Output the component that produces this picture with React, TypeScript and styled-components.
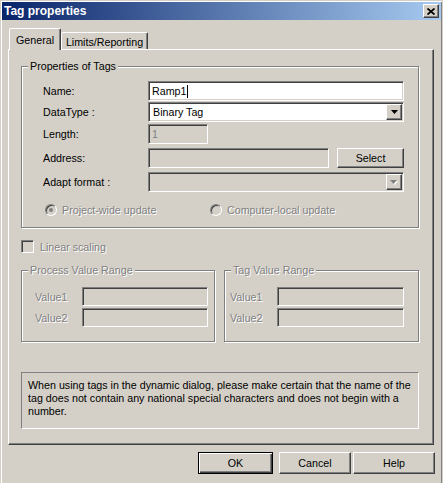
import styled, { createGlobalStyle } from "styled-components";

const GlobalStyle = createGlobalStyle`
  html, body {
    margin: 0;
    padding: 0;
    background: #d4d0c8;
  }
  body {
    font-family: "Liberation Sans", Arial, sans-serif;
    font-size: 10.7px;
    color: #000;
  }
  * {
    box-sizing: border-box;
  }
`;

const App = () => {
  return (
    <>
      <GlobalStyle />
      <Window>
        <TitleBar>
          <TitleText>Tag properties</TitleText>
          <CloseButton>
            <svg width="8" height="7" viewBox="0 0 8 7">
              <path d="M0.5 0.5 L7.5 6.5 M7.5 0.5 L0.5 6.5" stroke="#000" strokeWidth="1.7" />
            </svg>
          </CloseButton>
        </TitleBar>

        <Body>
          <TabStrip>
            <Tab $active $w={52}>General</Tab>
            <Tab $w={87}>Limits/Reporting</Tab>
          </TabStrip>

          <Panel>
            <Group $w={398} $h={162} $mt={16}>
              <GroupTitle>Properties of Tags</GroupTitle>

              <FormRow $mt={8}>
                <Label>Name:</Label>
                <Field $w={256}>
                  Ramp1
                  <Caret />
                </Field>
              </FormRow>
              <FormRow $mt={1}>
                <Label>DataType :</Label>
                <Combo $w={256}>
                  <ComboText>Binary Tag</ComboText>
                  <ArrowButton>
                    <svg width="7" height="4" viewBox="0 0 7 4">
                      <polygon points="0,0 7,0 3.5,4" fill="#000" />
                    </svg>
                  </ArrowButton>
                </Combo>
              </FormRow>
              <FormRow $mt={2}>
                <Label>Length:</Label>
                <Field $w={60} $disabled>
                  1
                </Field>
              </FormRow>
              <FormRow $mt={4}>
                <Label>Address:</Label>
                <Field $w={181} $disabled />
                <Button $w={67} $h={20} $ml={8}>
                  Select
                </Button>
              </FormRow>
              <FormRow $mt={4}>
                <Label>Adapt format :</Label>
                <Combo $w={256} $disabled>
                  <ComboText />
                  <ArrowButton>
                    <svg width="8" height="5" viewBox="0 0 8 5">
                      <polygon points="1,1 8,1 4.5,5" fill="#fff" />
                      <polygon points="0,0 7,0 3.5,4" fill="#808080" />
                    </svg>
                  </ArrowButton>
                </Combo>
              </FormRow>

              <RadioRow>
                <RadioOption $w={165}>
                  <Radio>
                    <RadioDot />
                  </Radio>
                  <DisabledText>Project-wide update</DisabledText>
                </RadioOption>
                <RadioOption>
                  <Radio />
                  <DisabledText>Computer-local update</DisabledText>
                </RadioOption>
              </RadioRow>
            </Group>

            <CheckRow>
              <Checkbox />
              <DisabledText>Linear scaling</DisabledText>
            </CheckRow>

            <RangeRow>
              <Group $w={194} $h={72}>
                <GroupTitle $disabled>Process Value Range</GroupTitle>
                <ValueRow $mt={10} $pl={13}>
                  <ValueLabel>Value1</ValueLabel>
                  <Field $w={126} $h={19} $disabled />
                </ValueRow>
                <ValueRow $mt={2} $pl={13}>
                  <ValueLabel>Value2</ValueLabel>
                  <Field $w={126} $h={19} $disabled />
                </ValueRow>
              </Group>
              <Group $w={195} $h={72}>
                <GroupTitle $disabled>Tag Value Range</GroupTitle>
                <ValueRow $mt={10} $pl={5}>
                  <ValueLabel>Value1</ValueLabel>
                  <Field $w={127} $h={19} $disabled />
                </ValueRow>
                <ValueRow $mt={2} $pl={5}>
                  <ValueLabel>Value2</ValueLabel>
                  <Field $w={127} $h={19} $disabled />
                </ValueRow>
              </Group>
            </RangeRow>

            <InfoBox>
              When using tags in the dynamic dialog, please make certain that the name of the tag
              does not contain any national special characters and does not begin with a number.
            </InfoBox>
          </Panel>

          <ButtonRow>
            <Button $w={75} $h={22} $default>
              OK
            </Button>
            <Button $w={72} $h={22} $ml={6}>
              Cancel
            </Button>
            <Button $w={82} $h={22} $ml={2}>
              Help
            </Button>
          </ButtonRow>
        </Body>
      </Window>
    </>
  );
};

const raised = `
  border: 1px solid;
  border-color: #fff #404040 #404040 #fff;
  box-shadow: inset -1px -1px 0 #808080;
  background: #d4d0c8;
`;

const sunken = `
  border: 1px solid;
  border-color: #808080 #fff #fff #808080;
  box-shadow: inset 1px 1px 0 #404040, inset -1px -1px 0 #d4d0c8;
`;

const Window = styled.div`
  width: 443px;
  height: 483px;
  background: #d4d0c8;
  border: 1px solid #d4d0c8;
  border-bottom: none;
  box-shadow: inset 1px 1px 0 #fff, inset -1px 0 0 #808080;
  padding: 1px 1px 0 1px;
  overflow: hidden;
`;

const TitleBar = styled.div`
  height: 18px;
  display: flex;
  align-items: center;
  justify-content: space-between;
  padding: 0 2px 0 2px;
  background: linear-gradient(to right, #0a246a, #a6caf0);
`;

const TitleText = styled.span`
  color: #fff;
  font-weight: bold;
  font-size: 12px;
`;

const CloseButton = styled.div`
  width: 16px;
  height: 14px;
  ${raised}
  display: flex;
  align-items: center;
  justify-content: center;
`;

const Body = styled.div`
  padding: 8px 0 0 6px;
`;

const TabStrip = styled.div`
  display: flex;
  align-items: flex-end;
  height: 21px;
  padding-left: 1px;
`;

const Tab = styled.div<{ $active?: boolean; $w: number }>`
  width: ${(p) => p.$w}px;
  height: ${(p) => (p.$active ? 22 : 17)}px;
  margin-bottom: ${(p) => (p.$active ? -1 : 0)}px;
  position: relative;
  z-index: ${(p) => (p.$active ? 2 : 1)};
  border: 1px solid;
  border-bottom: none;
  border-color: #fff #404040 transparent #fff;
  border-radius: 2px 2px 0 0;
  box-shadow: inset -1px 0 0 #808080;
  background: #d4d0c8;
  display: flex;
  align-items: center;
  justify-content: center;
  padding-top: ${(p) => (p.$active ? 0 : 1)}px;
  white-space: nowrap;
`;

const Panel = styled.div`
  position: relative;
  z-index: 1;
  width: 426px;
  height: 396px;
  ${raised}
  padding: 0 0 0 12px;
`;

const Group = styled.div<{ $w: number; $h: number; $mt?: number }>`
  width: ${(p) => p.$w}px;
  height: ${(p) => p.$h}px;
  margin-top: ${(p) => p.$mt ?? 0}px;
  border: 1px solid #808080;
  box-shadow: inset 1px 1px 0 #fff, 1px 1px 0 #fff;
`;

const GroupTitle = styled.div<{ $disabled?: boolean }>`
  width: fit-content;
  height: 13px;
  line-height: 13px;
  margin: -7px 0 0 6px;
  padding: 0 2px;
  background: #d4d0c8;
  white-space: nowrap;
  color: ${(p) => (p.$disabled ? "#808080" : "#000")};
  text-shadow: ${(p) => (p.$disabled ? "1px 1px 0 #fff" : "none")};
`;

const FormRow = styled.div<{ $mt: number }>`
  display: flex;
  align-items: center;
  height: 20px;
  margin-top: ${(p) => p.$mt}px;
  padding-left: 21px;
`;

const Label = styled.span`
  width: 105px;
  flex-shrink: 0;
  white-space: nowrap;
`;

const Field = styled.div<{ $w: number; $h?: number; $disabled?: boolean }>`
  width: ${(p) => p.$w}px;
  height: ${(p) => p.$h ?? 20}px;
  ${sunken}
  background: ${(p) => (p.$disabled ? "#d4d0c8" : "#fff")};
  color: ${(p) => (p.$disabled ? "#808080" : "#000")};
  display: flex;
  align-items: center;
  padding: 0 3px;
  flex-shrink: 0;
`;

const Caret = styled.span`
  width: 1px;
  height: 13px;
  background: #000;
  margin-left: 1px;
`;

const Combo = styled.div<{ $w: number; $disabled?: boolean }>`
  width: ${(p) => p.$w}px;
  height: 20px;
  ${sunken}
  background: ${(p) => (p.$disabled ? "#d4d0c8" : "#fff")};
  display: flex;
  align-items: stretch;
  padding: 1px 1px 1px 4px;
`;

const ComboText = styled.span`
  flex: 1;
  display: flex;
  align-items: center;
`;

const ArrowButton = styled.div`
  width: 16px;
  ${raised}
  display: flex;
  align-items: center;
  justify-content: center;
`;

const Button = styled.div<{ $w: number; $h: number; $ml?: number; $default?: boolean }>`
  width: ${(p) => p.$w}px;
  height: ${(p) => p.$h}px;
  margin-left: ${(p) => p.$ml ?? 0}px;
  flex-shrink: 0;
  display: flex;
  align-items: center;
  justify-content: center;
  background: #d4d0c8;
  ${(p) =>
    p.$default
      ? `border: 1px solid #000;
         box-shadow: inset 1px 1px 0 #fff, inset -1px -1px 0 #404040, inset -2px -2px 0 #808080;`
      : `border: 1px solid;
         border-color: #fff #404040 #404040 #fff;
         box-shadow: inset -1px -1px 0 #808080;`}
`;

const RadioRow = styled.div`
  display: flex;
  align-items: center;
  height: 13px;
  margin-top: 11px;
  padding-left: 23px;
`;

const RadioOption = styled.div<{ $w?: number }>`
  display: flex;
  align-items: center;
  gap: 5px;
  width: ${(p) => (p.$w ? `${p.$w}px` : "auto")};
`;

const Radio = styled.span`
  width: 12px;
  height: 12px;
  border-radius: 50%;
  border: 1px solid;
  border-color: #808080 #fff #fff #808080;
  box-shadow: inset 1px 1px 0 #404040, inset -1px -1px 0 #d4d0c8;
  background: #d4d0c8;
  display: flex;
  align-items: center;
  justify-content: center;
`;

const RadioDot = styled.span`
  width: 4px;
  height: 4px;
  border-radius: 50%;
  background: #808080;
`;

const DisabledText = styled.span`
  color: #808080;
  text-shadow: 1px 1px 0 #fff;
  white-space: nowrap;
`;

const CheckRow = styled.div`
  display: flex;
  align-items: center;
  gap: 6px;
  height: 13px;
  margin-top: 12px;
`;

const Checkbox = styled.span`
  width: 13px;
  height: 13px;
  ${sunken}
  background: #d4d0c8;
`;

const RangeRow = styled.div`
  display: flex;
  gap: 9px;
  margin-top: 17px;
`;

const ValueRow = styled.div<{ $mt: number; $pl: number }>`
  display: flex;
  align-items: center;
  margin-top: ${(p) => p.$mt}px;
  padding-left: ${(p) => p.$pl}px;
`;

const ValueLabel = styled.span`
  width: 47px;
  color: #808080;
  text-shadow: 1px 1px 0 #fff;
`;

const InfoBox = styled.div`
  width: 398px;
  height: 57px;
  margin-top: 30px;
  border: 1px solid;
  border-color: #808080 #fff #fff #808080;
  padding: 6px 3px 0 6px;
  line-height: 13px;
`;

const ButtonRow = styled.div`
  display: flex;
  justify-content: flex-end;
  width: 427px;
  margin-top: 7px;
`;

export default App;
